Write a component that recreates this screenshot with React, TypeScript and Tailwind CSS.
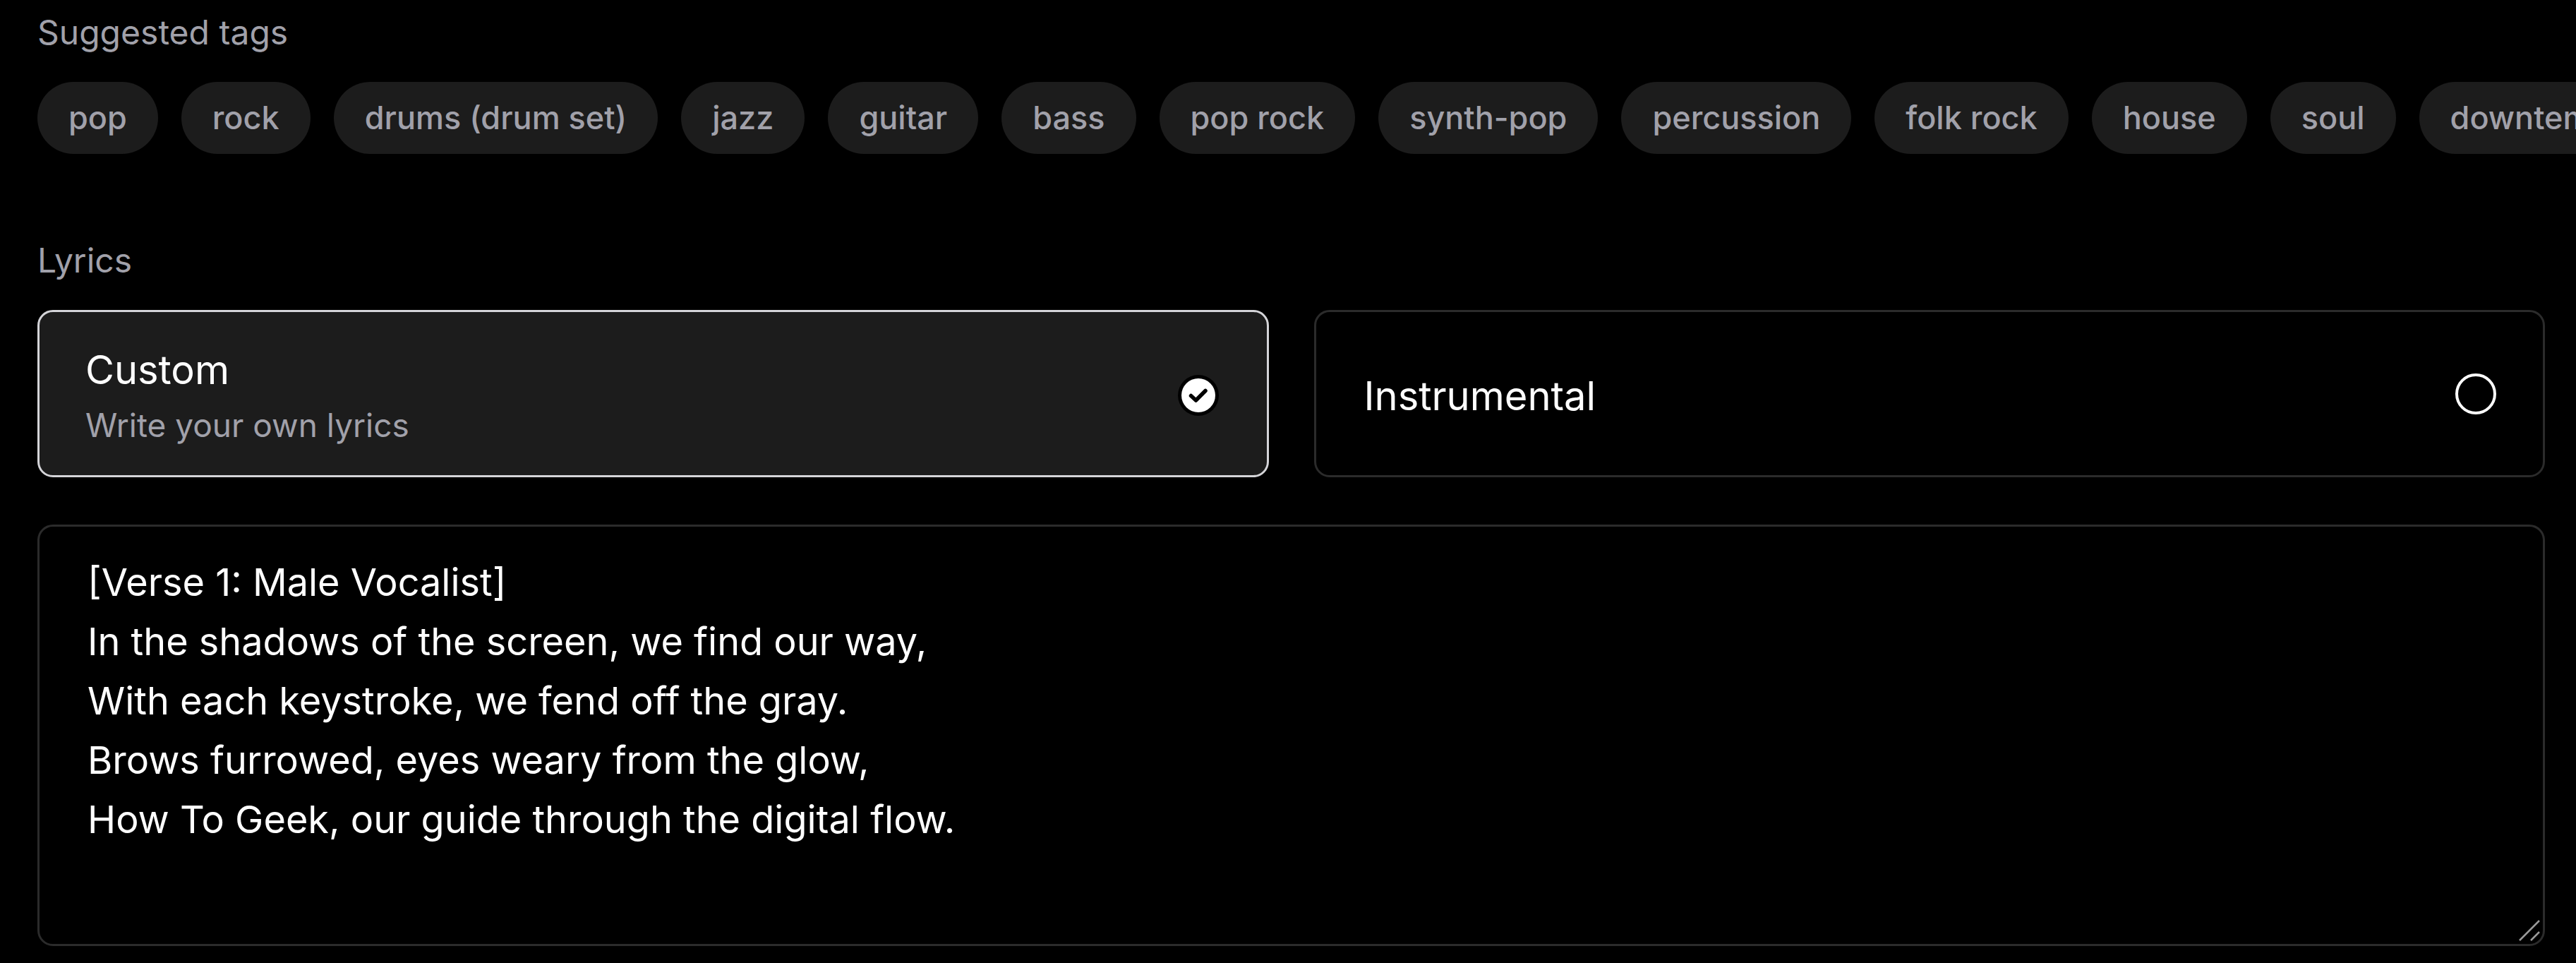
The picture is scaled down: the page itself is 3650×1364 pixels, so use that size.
import React, { useState } from 'react';

const tags = [
  'pop',
  'rock',
  'drums (drum set)',
  'jazz',
  'guitar',
  'bass',
  'pop rock',
  'synth-pop',
  'percussion',
  'folk rock',
  'house',
  'soul',
  'downtempo',
];

const initialLyrics = `[Verse 1: Male Vocalist]
In the shadows of the screen, we find our way,
With each keystroke, we fend off the gray.
Brows furrowed, eyes weary from the glow,
How To Geek, our guide through the digital flow.`;

function CheckedDot() {
  return (
    <svg width="58" height="58" viewBox="0 0 58 58" className="shrink-0">
      <circle cx="29" cy="29" r="29" fill="#000" />
      <circle cx="29" cy="29" r="24" fill="#fff" />
      <path d="M18.5 29.5 L25.5 36 L39 22.5" fill="none" stroke="#000" strokeWidth="5.5" strokeLinecap="round" strokeLinejoin="round" />
    </svg>
  );
}

function EmptyDot() {
  return <div className="h-[58px] w-[58px] shrink-0 rounded-full border-[4px] border-white" />;
}

export default function App() {
  const [mode, setMode] = useState<'custom' | 'instrumental'>('custom');
  const [lyrics, setLyrics] = useState(initialLyrics);

  return (
    <div className="h-[1364px] w-[3650px] overflow-hidden bg-black pl-[53px] pr-[44px] pt-[10px] font-['Inter',sans-serif] text-white">
      {/* Suggested tags */}
      <div className="text-[48px] leading-[72px] text-[#a1a1aa]">Suggested tags</div>
      <div className="mt-[34px] flex gap-[33px]">
        {tags.map((tag) => (
          <button
            key={tag}
            className="flex h-[102px] shrink-0 items-center rounded-full bg-[#1c1c1c] px-[44px] text-[45px] font-medium whitespace-nowrap text-[#a1a1aa]"
          >
            {tag}
          </button>
        ))}
      </div>

      {/* Lyrics */}
      <div className="mt-[115px] text-[48px] leading-[72px] text-[#a1a1aa]">Lyrics</div>
      <div className="mt-[34px] grid grid-cols-2 gap-[64px]">
        <button
          onClick={() => setMode('custom')}
          className={`flex items-center justify-between rounded-[22px] border-[3px] pl-[65px] pr-[68px] pt-[40px] pb-[36px] text-left ${
            mode === 'custom' ? 'border-[#d4d4d8] bg-[#1c1c1c]' : 'border-[#2b2b2b] bg-black'
          }`}
        >
          <div className="flex flex-col gap-[2px]">
            <span className="text-[56px] leading-[84px] text-white">Custom</span>
            <span className="text-[46px] leading-[69px] text-[#a1a1aa]">Write your own lyrics</span>
          </div>
          {mode === 'custom' ? <CheckedDot /> : <EmptyDot />}
        </button>
        <button
          onClick={() => setMode('instrumental')}
          className={`flex items-center justify-between rounded-[22px] border-[3px] pl-[68px] pr-[66px] text-left ${
            mode === 'instrumental' ? 'border-[#d4d4d8] bg-[#1c1c1c]' : 'border-[#2b2b2b] bg-black'
          }`}
        >
          <span className="mt-[6px] text-[56px] leading-[84px] text-white">Instrumental</span>
          {mode === 'instrumental' ? <CheckedDot /> : <EmptyDot />}
        </button>
      </div>

      {/* Lyrics editor */}
      <div className="relative mt-[67px]">
        <textarea
          value={lyrics}
          onChange={(e) => setLyrics(e.target.value)}
          className="block h-[597px] w-full resize-none rounded-[22px] border-[3px] border-[#2b2b2b] bg-black pl-[68px] pr-[68px] pt-[37px] text-[54px] leading-[84px] text-white outline-none"
        />
        {/* resize grip */}
        <svg width="40" height="40" viewBox="0 0 40 40" className="pointer-events-none absolute bottom-[4px] right-[4px]">
          <line x1="8" y1="36" x2="36" y2="8" stroke="#9a9a9a" strokeWidth="2.5" />
          <line x1="24" y1="36" x2="36" y2="24" stroke="#9a9a9a" strokeWidth="2.5" />
        </svg>
      </div>
    </div>
  );
}
